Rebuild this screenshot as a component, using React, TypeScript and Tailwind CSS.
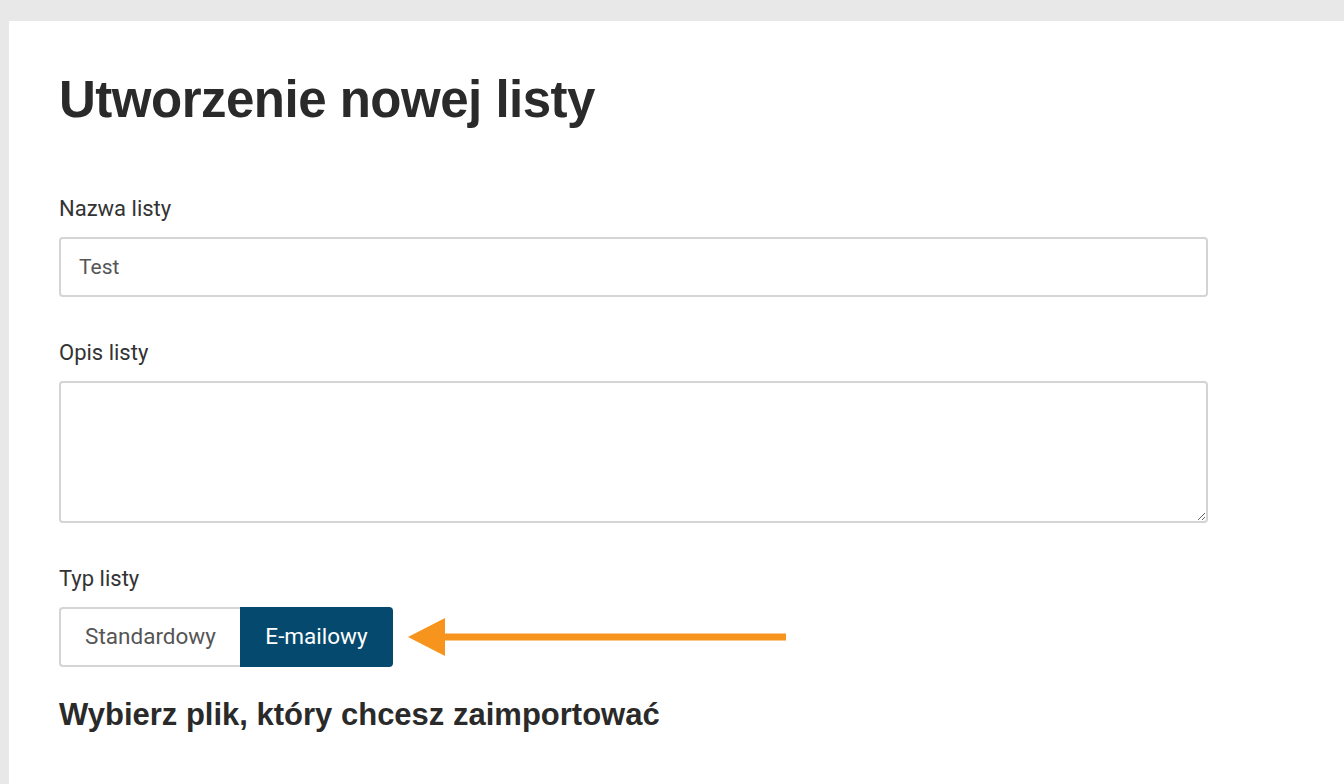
export default function App() {
  return (
    <div className="min-h-[784px] bg-[#e8e8e8] pl-[9px] pt-[21px] font-['Roboto',sans-serif] text-[#333]">
      <div className="min-h-[763px] bg-white pl-[50px] pr-[136px] pt-[54px]">
        <h1 className="font-['Liberation_Sans',Arial,sans-serif] text-[51px] font-bold leading-[50px] tracking-[-0.5px] text-[#2a2a2a]">
          Utworzenie nowej listy
        </h1>

        <label className="mt-[72px] block text-[22px] leading-[24px]">Nazwa listy</label>
        <input
          defaultValue="Test"
          className="mt-[16px] block h-[60px] w-full rounded-[4px] border-2 border-[#d4d4d4] px-[18px] text-[21px] text-[#555] outline-none"
        />

        <label className="mt-[44px] block text-[22px] leading-[24px]">Opis listy</label>
        <textarea className="mt-[16px] block h-[142px] w-full rounded-[4px] border-2 border-[#d4d4d4] px-[18px] py-3 text-[21px] outline-none" />

        <label className="mt-[44px] block text-[22px] leading-[24px]">Typ listy</label>
        <div className="mt-[16px] flex items-center">
          <div className="flex h-[60px]">
            <button className="w-[181px] rounded-l-[4px] border-2 border-r-0 border-[#d4d4d4] text-[22.5px] text-[#555]">Standardowy</button>
            <button className="w-[153px] rounded-r-[4px] bg-[#054a6e] text-[22.5px] text-white">E-mailowy</button>
          </div>
          <svg width="378" height="40" viewBox="0 0 378 40" className="ml-[15px]">
            <path d="M0 20 L37 1 L37 39 Z" fill="#f7941d" />
            <rect x="34" y="16.5" width="344" height="7" fill="#f7941d" />
          </svg>
        </div>

        <h2 className="mt-[30px] font-['Liberation_Sans',Arial,sans-serif] text-[31px] font-bold leading-[36px] text-[#2a2a2a]">
          Wybierz plik, który chcesz zaimportować
        </h2>
      </div>
    </div>
  );
}
